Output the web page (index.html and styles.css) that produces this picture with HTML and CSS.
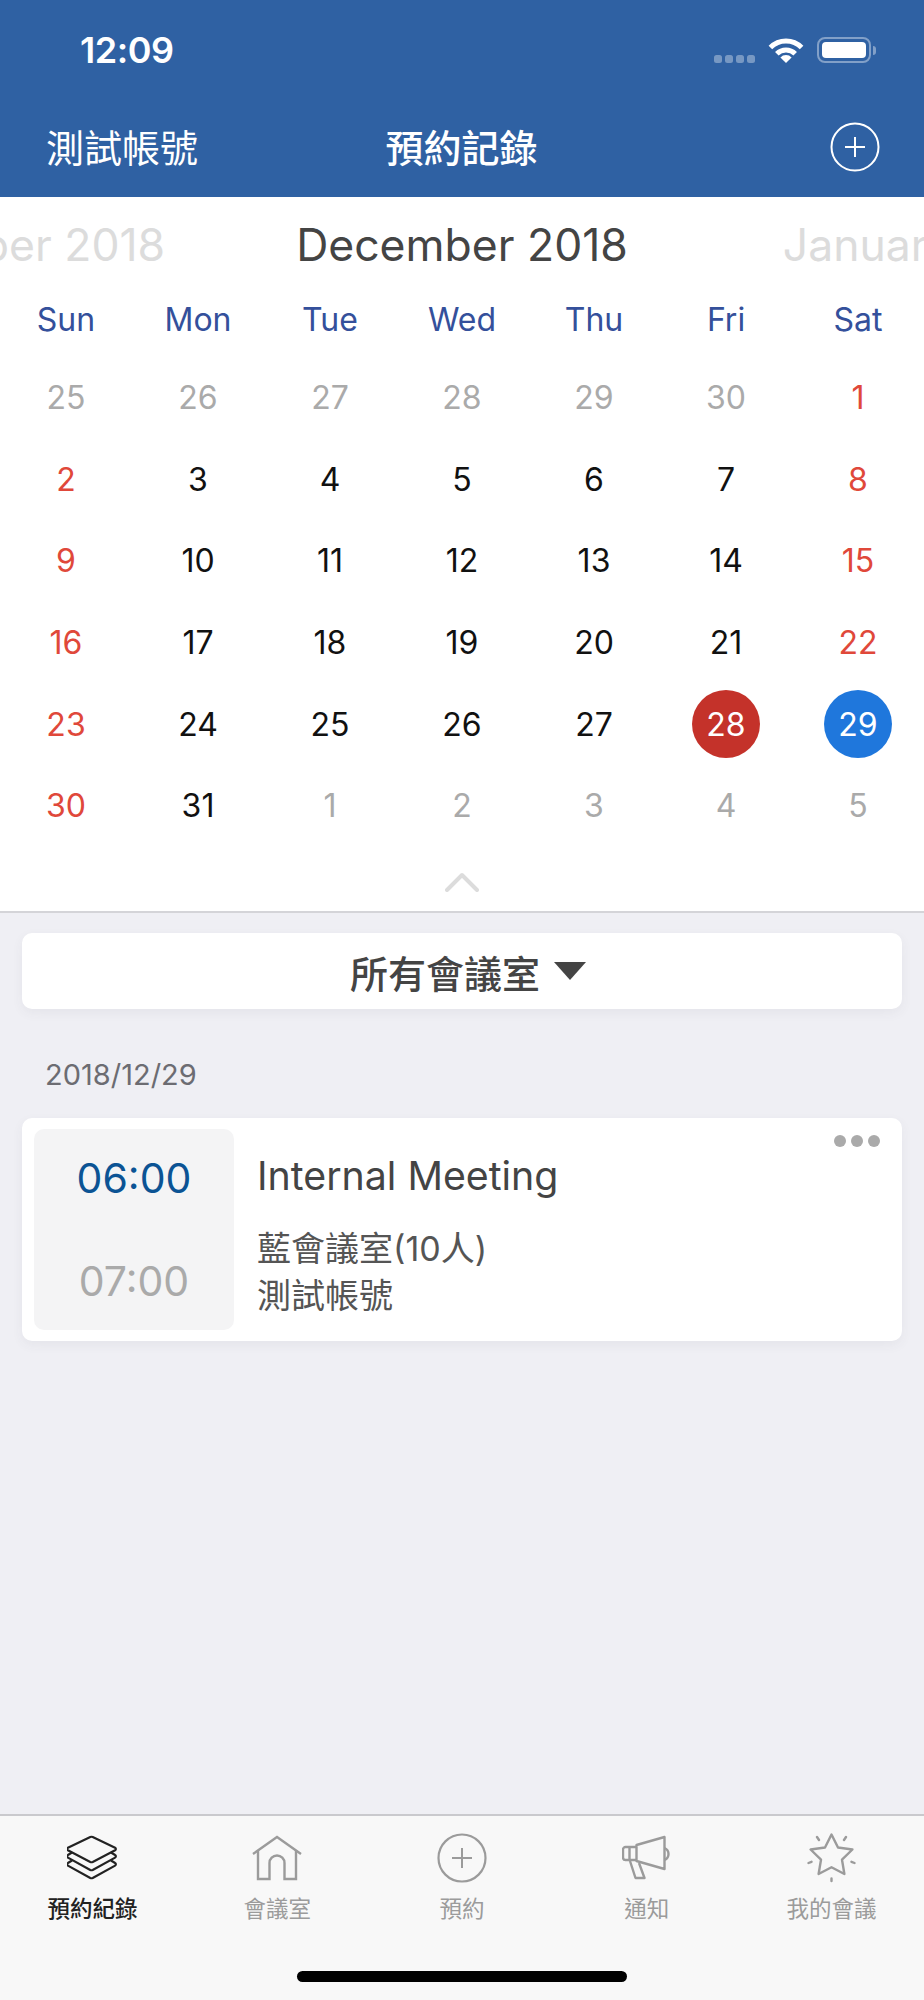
FILE: index.html
```html
<!DOCTYPE html>
<html lang="zh-Hant">
<head>
<meta charset="utf-8">
<title>預約記錄</title>
<link rel="stylesheet" href="styles.css">
</head>
<body>
<div class="app">
  <header class="top">
    <div class="status">
      <span class="clock">12:09</span>
      <div class="status-icons">
        <div class="signal"><i></i><i></i><i></i><i></i></div>
        <svg class="wifi" width="36" height="26" viewBox="0 0 36 26"><path d="M2.4 10.4a22 22 0 0 1 31.2 0M8.8 16.8a13 13 0 0 1 18.4 0" fill="none" stroke="#fff" stroke-width="5"/><path d="M18 26l-5.6-5.6a8 8 0 0 1 11.2 0z" fill="#fff"/></svg>
        <div class="battery"><div class="battery-fill"></div></div>
        <div class="battery-nub"></div>
      </div>
    </div>
    <nav class="nav">
      <span class="nav-left">測試帳號</span>
      <span class="nav-title">預約記錄</span>
      <svg class="nav-add" width="50" height="50" viewBox="0 0 50 50"><circle cx="25" cy="25" r="23.5" fill="none" stroke="#fff" stroke-width="2"/><path d="M15 25h20M25 15v20" stroke="#fff" stroke-width="2"/></svg>
    </nav>
  </header>

  <section class="calendar">
    <div class="months">
      <div class="month-side month-prev"><span>November 2018</span></div>
      <div class="month-current">December 2018</div>
      <div class="month-side month-next"><span>January 2019</span></div>
    </div>
    <div class="weekdays">
      <span>Sun</span><span>Mon</span><span>Tue</span><span>Wed</span><span>Thu</span><span>Fri</span><span>Sat</span>
    </div>
    <div class="days">
      <span class="muted">25</span><span class="muted">26</span><span class="muted">27</span><span class="muted">28</span><span class="muted">29</span><span class="muted">30</span><span class="holiday">1</span>
      <span class="holiday">2</span><span>3</span><span>4</span><span>5</span><span>6</span><span>7</span><span class="holiday">8</span>
      <span class="holiday">9</span><span>10</span><span>11</span><span>12</span><span>13</span><span>14</span><span class="holiday">15</span>
      <span class="holiday">16</span><span>17</span><span>18</span><span>19</span><span>20</span><span>21</span><span class="holiday">22</span>
      <span class="holiday">23</span><span>24</span><span>25</span><span>26</span><span>27</span><span><b class="mark mark-today">28</b></span><span><b class="mark mark-selected">29</b></span>
      <span class="holiday">30</span><span>31</span><span class="muted">1</span><span class="muted">2</span><span class="muted">3</span><span class="muted">4</span><span class="muted">5</span>
    </div>
    <div class="collapse">
      <svg width="34" height="20" viewBox="0 0 34 20"><path d="M2 18L17 3l15 15" fill="none" stroke="#dcdcdc" stroke-width="4" stroke-linecap="round" stroke-linejoin="round"/></svg>
    </div>
  </section>

  <main class="content">
    <div class="filter">
      <span>所有會議室</span>
      <svg width="32" height="18" viewBox="0 0 32 18"><path d="M0 0h32L16 18z" fill="#444"/></svg>
    </div>
    <div class="date">2018/12/29</div>
    <article class="card">
      <div class="times">
        <span class="time-start">06:00</span>
        <span class="time-end">07:00</span>
      </div>
      <div class="details">
        <h2>Internal Meeting</h2>
        <p>藍會議室(10人)</p>
        <p>測試帳號</p>
      </div>
      <div class="more"><i></i><i></i><i></i></div>
    </article>
  </main>

  <footer class="tabs">
    <div class="tab tab-active">
      <svg width="50" height="50" viewBox="0 0 50 50" fill="none" stroke="#222" stroke-width="2.2" stroke-linejoin="round"><g transform="translate(0.5 3)"><path d="M22.8 1a3 3 0 0 1 2.4 0L47.6 11.7a1.5 1.5 0 0 1 0 2.6L25.2 26a3 3 0 0 1-2.4 0L.4 14.3a1.5 1.5 0 0 1 0-2.6z"/><path d="M4.5 16.5L.4 19a1.5 1.5 0 0 0 0 2.6L22.8 34a3 3 0 0 0 2.4 0L47.6 21.6a1.5 1.5 0 0 0 0-2.6l-4.1-2.5"/><path d="M4.5 24.5L.4 27a1.5 1.5 0 0 0 0 2.6L22.8 42a3 3 0 0 0 2.4 0L47.6 29.6a1.5 1.5 0 0 0 0-2.6l-4.1-2.5"/></g></svg>
      <span>預約紀錄</span>
    </div>
    <div class="tab">
      <svg width="50" height="50" viewBox="0 0 50 50" fill="none" stroke="#9b9b9b" stroke-width="2.4"><g transform="translate(0.5 3)"><path d="M0.5 18L24.5 1l24 17"/><path d="M5.5 14v29H17V27a7.5 7.5 0 0 1 15 0v16h11.5V14"/></g></svg>
      <span>會議室</span>
    </div>
    <div class="tab">
      <svg width="50" height="50" viewBox="0 0 50 50" fill="none" stroke="#9b9b9b" stroke-width="2.2"><circle cx="25" cy="25" r="23.5"/><path d="M15 25h20M25 15v20" stroke-width="2"/></svg>
      <span>預約</span>
    </div>
    <div class="tab">
      <svg width="50" height="50" viewBox="0 0 50 50" fill="none" stroke="#9b9b9b" stroke-width="2.4" stroke-linejoin="round"><g transform="translate(0.5 3)"><path d="M14 9L42 1v32L14 25z"/><path d="M14 11H3a2.5 2.5 0 0 0-2.5 2.5v8A2.5 2.5 0 0 0 3 24h11M7 11v13"/><path d="M42 12a6.5 6.5 0 0 1 0 12"/><path d="M7.5 25l5.5 17h9l-5.5-15"/></g></svg>
      <span>通知</span>
    </div>
    <div class="tab">
      <svg width="50" height="50" viewBox="0 0 50 50" fill="none" stroke="#9b9b9b" stroke-width="2.4" stroke-linejoin="round" stroke-linecap="round"><path d="M24.5 1.5l6.5 13 14.4 2-10.4 10.2 2.4 14.3-12.9-6.7L11.6 41 14 26.7 3.6 16.5l14.4-2z"/><path d="M10 4l2 3M39 4l-2 3M1.5 30l3-1.2M47.5 30l-3-1.2M24.5 45.5V48"/></svg>
      <span>我的會議</span>
    </div>
    <div class="home-indicator"></div>
  </footer>
</div>
</body>
</html>
```

FILE: styles.css
```css
* { box-sizing: border-box; margin: 0; padding: 0; }
html, body { height: 100%; }
body {
  font-family: Inter, "Noto Sans CJK TC", "Noto Sans", sans-serif;
  background: #efeff4;
  color: #444;
}
.app {
  display: flex;
  flex-direction: column;
  width: 924px;
  height: 2000px;
  overflow: hidden;
}

/* Header */
.top { height: 197px; background: #2f61a3; color: #fff; }
.status {
  display: flex;
  align-items: center;
  justify-content: space-between;
  height: 100px;
  padding: 0 48px 0 80px;
}
.clock { font-size: 36px; font-weight: 600; letter-spacing: -0.5px; }
.status-icons { display: flex; align-items: center; }
.signal { display: flex; gap: 3px; margin: 18px 13px 0 0; }
.signal i { width: 8px; height: 8px; border-radius: 2.5px; background: rgba(255,255,255,.35); }
.wifi { margin-right: 13px; }
.battery {
  width: 54px;
  height: 26px;
  padding: 3px;
  border: 2px solid rgba(255,255,255,.4);
  border-radius: 8px;
}
.battery-fill { height: 100%; background: #fff; border-radius: 4px; }
.battery-nub {
  width: 3px;
  height: 9px;
  margin-left: 2px;
  background: rgba(255,255,255,.4);
  border-radius: 0 3px 3px 0;
}
.nav {
  display: grid;
  grid-template-columns: 1fr auto 1fr;
  align-items: center;
  height: 94px;
  padding: 0 44px 0 46px;
  font-size: 38px;
}
.nav-left { margin-bottom: 4px; white-space: nowrap; }
.nav-title { margin: 0 3px 4px 0; font-weight: 500; }
.nav-add { justify-self: end; }

/* Calendar */
.calendar { height: 716px; background: #fff; border-bottom: 2px solid #d4d4d8; }
.months {
  display: grid;
  grid-template-columns: minmax(0, 1fr) auto minmax(0, 1fr);
  align-items: center;
  height: 96px;
  overflow: hidden;
  font-size: 44.5px;
  white-space: nowrap;
}
.month-side { display: flex; color: #dcdcdc; overflow: hidden; }
.month-prev { justify-content: flex-end; padding-right: 131px; }
.month-next { padding-left: 155px; }
.month-side span { flex: none; }
.weekdays, .days { display: grid; grid-template-columns: repeat(7, 132px); }
.weekdays {
  align-items: center;
  height: 54px;
  padding-bottom: 2px;
  color: #34509b;
  font-size: 32px;
  text-align: center;
}
.days { grid-auto-rows: 81.6px; margin-top: 10px; color: #111; font-size: 32px; }
.days span { display: flex; align-items: center; justify-content: center; }
.days .muted { color: #aaa; }
.days .holiday { color: #e0483a; }
.mark {
  display: flex;
  align-items: center;
  justify-content: center;
  width: 68px;
  height: 68px;
  border-radius: 50%;
  color: #fff;
  font-weight: 400;
}
.mark-today { background: #c4322a; }
.mark-selected { background: #1f77dc; }
.collapse { display: flex; justify-content: center; padding-top: 25px; }

/* Content */
.content { flex: 1; padding: 20px 22px 0; }
.filter {
  display: flex;
  align-items: center;
  justify-content: center;
  gap: 14px;
  height: 76px;
  padding-left: 12px;
  background: #fff;
  border-radius: 10px;
  box-shadow: 0 4px 12px rgba(60,60,80,.06);
  font-size: 38px;
  font-weight: 500;
}
.date { margin: 45px 0 0 23px; height: 42px; line-height: 42px; font-size: 29px; color: #6c6c72; }
.card {
  position: relative;
  display: flex;
  margin-top: 22px;
  padding: 11px 12px;
  height: 223px;
  background: #fff;
  border-radius: 10px;
  box-shadow: 0 4px 12px rgba(60,60,80,.06);
}
.times {
  display: flex;
  flex-direction: column;
  align-items: center;
  justify-content: space-between;
  flex: none;
  width: 200px;
  padding: 24px 0;
  background: #f4f4f5;
  border-radius: 10px;
  font-size: 41px;
}
.time-start { color: #0b5394; }
.time-end { color: #aaa; }
.details { padding: 21px 0 0 23px; }
.details h2 { margin-bottom: 23px; font-size: 39.3px; font-weight: 400; line-height: 52px; color: #444; }
.details p { font-size: 34px; line-height: 47px; color: #555; }
.more { position: absolute; top: 17px; right: 22px; display: flex; gap: 5px; }
.more i { width: 12px; height: 12px; border-radius: 50%; background: #aaa; }

/* Tab bar */
.tabs {
  position: relative;
  display: grid;
  grid-template-columns: repeat(5, 1fr);
  height: 186px;
  padding-top: 17px;
  background: #f8f8f8;
  border-top: 2px solid #c9c9cd;
  color: #9b9b9b;
  font-size: 22.5px;
}
.tab { display: flex; flex-direction: column; align-items: center; gap: 9px; line-height: 34px; }
.tab svg { display: block; }
.tab-active { color: #222; font-weight: 500; }
.home-indicator {
  position: absolute;
  left: 297px;
  bottom: 18px;
  width: 330px;
  height: 11px;
  border-radius: 6px;
  background: #000;
}
```
